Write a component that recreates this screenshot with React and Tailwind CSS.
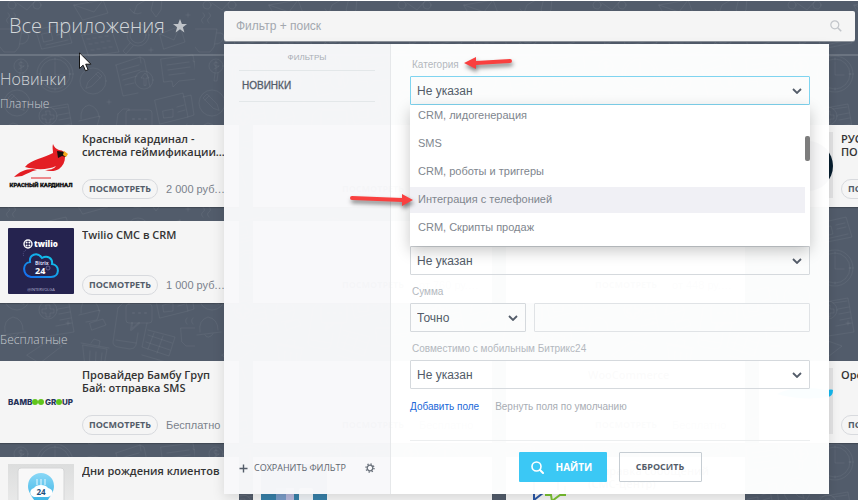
import React from "react";

const helv = "font-['Liberation_Sans',Arial,sans-serif]";

function Doodles() {
  return (
    <svg className="absolute inset-0 h-full w-full" aria-hidden="true">
      <defs>
        <pattern id="doodles" width="195" height="194" patternUnits="userSpaceOnUse">
          <g fill="none" stroke="#fff" strokeOpacity="0.05" strokeWidth="1" strokeLinejoin="round" strokeLinecap="round">
            <circle cx="55" cy="73" r="18" />
            <circle cx="55" cy="73" r="15" />
            <path d="M55 61v13h9M55 57v2M55 87v2M39 73h2M69 73h2" />
            <circle cx="21" cy="65" r="7" />
            <path d="M23 62q-4-2-4 1t4 2-4 3M21 60v10M20 72l-1 8h3l1-8" />
            <circle cx="93" cy="80" r="13" />
            <path d="M86 87l2-6 10-10 4 4-10 10zM96 73l4 4" />
            <circle cx="17" cy="102" r="13" />
            <path d="M24 109l-2-6-10-10-4 4 10 10zM14 95l-4 4" />
            <path d="M116 64l24-8 4 2 6 28M116 64l7 31 15-3M140 56l1 6M121 69l18-5M122 74l18-5M123 79l14-4M125 84l9-2" />
            <circle cx="144" cy="79" r="9" />
            <path d="M144 84v-7h-3l4-5 4 5h-3v7z" />
            <path d="M161 58l32-4 4 24-18 2-6 6-1-6-8 1zM167 64l22-3M168 69l22-3M169 74l16-2M193 60l6 3-2 22" />
            <path d="M155 99l28-7 5 24-28 7zM183 96l8-2 3 20-6 2M163 110l10-2v8l-9 1zM177 106l7-2M178 111l7-2" />
            <path d="M36 29l30-7 6 20-30 6zM42 33l9-2 2 8-9 2zM56 30l9-2M57 34l9-2M46 44l22-5" />
            <path d="M82 34l30-4 7 21-30 4zM87 38h3M93 37h3M99 36h3M105 35h3M89 43h3M95 42h3M101 41h3M107 40h3M91 49h3M97 48h3M103 47h3M109 46h3" />
            <circle cx="138" cy="34" r="11" />
            <circle cx="138" cy="34" r="8" />
            <path d="M130 42l-7 8 3 3 7-8" />
            <path d="M160 33l20-8 5 16-21 7zM160 33l14 6 6-14" />
            <path d="M0 28h22l-3 18-4 5H4L0 46M22 32q9-1 6 6-2 5-8 5M8 22q-3-3 0-5t0-5M14 22q-3-3 0-5t0-5" />
            <path d="M40 108l28-5 6 34-26 4M53 108l14-2M58 114l11-2M59 119l11-2M60 125l11-2M56 131l16-3" />
            <circle cx="48" cy="115" r="9" />
            <path d="M46 110h4v4h4v4h-4v4h-4v-4h-4v-4h4z" />
            <path d="M81 118q-1-12 8-14 9 2 10 12M79 120l21-5-3 10-11 2M90 128l13-4 3 6-14 5z" />
            <path d="M118 113l5-5h6M118 113l-5 34q0 4 5 5l12 2q5 0 6-4l2-12M116 145l20 3" />
            <rect x="126" y="109" width="26" height="19" rx="3" />
            <path d="M132 128l-1 7 8-7M133 118h1M139 118h1M145 118h1" strokeWidth="2" />
            <path d="M181 133h21l-3 14-4 4h-9l-4-4zM187 129q-3-3 0-6M193 129q-3-3 0-6" />
            <path d="M83 150l24 4-5 28-16-4zM81 148l28 5M91 148l3-4 6 2-1 5M90 156l-1 20M96 157l-1 20M102 158l-2 18" />
            <path d="M147 128l-5 24 27 9 6-19-27-7M142 160l24 7M148 140l24 8M146 147l24 8M154 138l-6 16M163 141l-6 17" />
            <path d="M27 160l21-14 14 5-22 17zM5 137q-2-12 8-15 10 2 10 13M2 140l24-3M10 140q3 5 8-1" />
            <path d="M74 4l29-5 5 13-25 7zM74 4l20 7 9-12M130 8q4 7 11 4M134 12l3-8 9-5M154-3l-3 12 5 7 5-7 1-12M17 2l10 7 8-9" />
            <circle cx="12" cy="4" r="4" />
            <circle cx="37" cy="4" r="4" />
            <path d="M135 175l20-5 8 16-20 6zM170 178l16 5-4 8M30 178l16-6 5 14" />
            <path d="M151 47v4M149 49h4M109 99v4M107 101h4M188 12v4M186 14h4M68 126v4M66 128h4" />
          </g>
        </pattern>
      </defs>
      <rect width="100%" height="100%" fill="url(#doodles)" />
    </svg>
  );
}

function CardinalLogo() {
  return (
    <svg viewBox="0 0 66 66" className="h-full w-full overflow-visible" aria-hidden="true">
      <path d="M45 12c1 3 3 5 6 6 4 0 7 3 6 7 0 5-2 9-6 12-3 2-9 3-14 1 5 0 9-1 11-4-8 4-20 4-31 1 3-4 8-6 13-8 6-2 11-4 15-6 0-3-1-6 0-9z" fill="#e31e24" />
      <path d="M6 45c5-5 11-8 19-8l4 1c-6 1-10 4-15 6z" fill="#e31e24" />
      <path d="M49 19l8 1 1 5-4-1-4 2z" fill="#17110f" />
      <path d="M56 19l4 3-2 3-3-2z" fill="#f6a81c" />
      <path d="M23 46h20" stroke="#e31e24" strokeWidth="1" />
      <text x="33" y="55" textAnchor="middle" fontSize="6" fontWeight="900" fill="#111" stroke="#111" strokeWidth="0.3" className="font-[Roboto,sans-serif]">КРАСНЫЙ КАРДИНАЛ</text>
    </svg>
  );
}

function TwilioLogo() {
  return (
    <svg viewBox="0 0 66 66" className="h-full w-full" aria-hidden="true">
      <defs>
        <linearGradient id="cloud" x1="0" y1="1" x2="1" y2="0">
          <stop offset="0" stopColor="#1668f0" />
          <stop offset="1" stopColor="#10d5e6" />
        </linearGradient>
      </defs>
      <rect width="66" height="66" rx="1" fill="#25234f" />
      <circle cx="20" cy="16" r="4" fill="none" stroke="#fff" strokeWidth="1.4" />
      <g fill="#fff">
        <circle cx="18.600" cy="14.600" r="1" /><circle cx="21.400" cy="14.600" r="1" />
        <circle cx="18.600" cy="17.400" r="1" /><circle cx="21.400" cy="17.400" r="1" />
      </g>
      <text x="26" y="19" fontSize="8" fontWeight="800" fill="#fff" className="font-['Open_Sans',sans-serif]">twilio</text>
      <path d="M23 49h20c9 0 9-12 1-13 1-6-5-9-10-6-5-7-13-3-12 4-8 1-8 13 1 15z" fill="none" stroke="url(#cloud)" strokeWidth="2" />
      <path d="M18 22q-4 2-2 7" fill="none" stroke="#55548a" strokeDasharray="1 1" />
      <text x="27" y="37" fontSize="5" fontWeight="700" fill="#d8d8ee" className="font-['Open_Sans',sans-serif]">Bitrix</text>
      <text x="27" y="46" fontSize="9" fontWeight="700" fill="#fff" className="font-['Open_Sans',sans-serif]">24</text>
      <circle cx="40" cy="40" r="2" fill="none" stroke="#8b8ab5" strokeWidth="0.6" />
      <text x="33" y="63" textAnchor="middle" fontSize="4" fill="#b8b7d3" className="font-['Open_Sans',sans-serif]">@INTERVOLGA</text>
    </svg>
  );
}

function BambooLogo() {
  return (
    <svg viewBox="0 0 66 66" className="h-full w-full overflow-visible" aria-hidden="true">
      <g fontSize="8" fontWeight="800" fill="#27335a" className="font-[Inter,sans-serif]">
        <text x="0" y="37">BAMB</text>
        <text x="37" y="37">GR</text>
        <text x="54" y="37">UP</text>
      </g>
      <g fill="#61c51c">
        <circle cx="27" cy="34" r="3" /><circle cx="33" cy="34" r="3" /><circle cx="51" cy="34" r="3" />
      </g>
    </svg>
  );
}

function BirthdayLogo() {
  return (
    <svg viewBox="0 0 66 66" className="h-full w-full" aria-hidden="true">
      <defs>
        <linearGradient id="tile" x1="0" y1="0" x2="0" y2="1">
          <stop offset="0" stopColor="#dcdddd" /><stop offset="1" stopColor="#f2f2f2" />
        </linearGradient>
        <linearGradient id="drop" x1="0" y1="0" x2="0" y2="1">
          <stop offset="0" stopColor="#8ad8f7" /><stop offset="1" stopColor="#1ba4dc" />
        </linearGradient>
      </defs>
      <rect width="66" height="66" fill="url(#tile)" />
      <rect x="10" y="4" width="46" height="60" rx="3" fill="#f8f8f8" stroke="#d5d6d7" />
      <path d="M20 22a13 13 0 0 1 26 0c0 9-8 13-13 28-5-15-13-19-13-28z" fill="url(#drop)" />
      <path d="M29 15v6M33 15v6M37 15v6" stroke="#e9f8ff" strokeWidth="1" />
      <path d="M26 33c-5-1-5-8 0-9 2-4 12-4 14 0 6 1 6 8 0 9z" fill="#fff" />
      <text x="33" y="31" textAnchor="middle" fontSize="8" fontWeight="700" fill="#1b4f7c" className="font-['Open_Sans',sans-serif]">24</text>
    </svg>
  );
}

function BlockLogo() {
  return (
    <svg viewBox="0 0 66 66" className="h-full w-full" aria-hidden="true">
      <rect width="66" height="66" fill="#377fa8" />
      <rect x="15" y="24" width="10" height="42" fill="#7a9cc8" />
      <rect x="25" y="24" width="8" height="42" fill="#b9b9dc" />
      <rect x="38" y="24" width="14" height="42" rx="2" fill="#eef2f6" />
    </svg>
  );
}

function ChatLogo() {
  return (
    <svg viewBox="0 0 66 66" className="h-full w-full" aria-hidden="true">
      <path d="M20 14h24v12M20 14v22l9-7" fill="none" stroke="#2b57a5" strokeWidth="2" />
      <path d="M51 22v9h-5l-8 6-1-6h-6" fill="none" stroke="#7ac231" strokeWidth="2" />
    </svg>
  );
}

function DarkCircleLogo() {
  return (
    <svg viewBox="0 0 66 66" className="h-full w-full" aria-hidden="true">
      <rect width="66" height="66" fill="#e4e4e5" />
      <circle cx="41" cy="34" r="25" fill="#061d2e" />
    </svg>
  );
}

function SkyLogo() {
  return (
    <svg viewBox="0 0 66 66" className="h-full w-full" aria-hidden="true">
      <rect width="66" height="66" fill="#e4e4e5" />
      <path d="M10 26q20-10 48-4 8-1 8 0 0 6-5 7-26 4-51-3z" fill="#14b9f0" />
    </svg>
  );
}

function Card({ title, price, logo: Logo }) {
  return (
    <article className="flex h-[82px] gap-2 bg-[#f5f5f5] px-2 pt-[7px] pb-2 shadow-[0_1px_1px_rgba(0,0,0,0.2)]">
      <div className="size-[66px] shrink-0">{Logo && <Logo />}</div>
      <div className="flex min-w-0 flex-1 flex-col justify-between">
        <h3 className="line-clamp-2 text-[11px] leading-[13px] font-semibold whitespace-pre-line text-[#333]">{title}</h3>
        <div className="flex items-center gap-2">
          <button className="h-5 w-[76px] shrink-0 rounded-full border border-[#d8dade] text-[9px] leading-4 font-bold text-[#535c69]">
            ПОСМОТРЕТЬ
          </button>
          <span className={`${helv} text-[11px] whitespace-nowrap text-[#7b828c]`}>{price}</span>
        </div>
      </div>
    </article>
  );
}

const paid = [
  { title: "Красный кардинал - система геймификации…", price: "2 000 руб.…", logo: CardinalLogo },
  { title: "", price: "" },
  { title: "", price: "" },
  { title: "РУССКИЙ\nПОРТАЛ", price: "", logo: DarkCircleLogo },
  { title: "Twilio СМС в CRM", price: "1 000 руб.…", logo: TwilioLogo },
  { title: "", price: "от 760 ру.…" },
  { title: "", price: "от 448 ру.…" },
];

const free = [
  { title: "Провайдер Бамбу Груп Бай: отправка SMS", price: "Бесплатно", logo: BambooLogo },
  { title: "", price: "Бесплатно" },
  { title: "WooCommerce", price: "Бесплатно" },
  { title: "Орен", price: "Бесплатно", logo: SkyLogo },
  { title: "Дни рождения клиентов", price: "Бесплатно", logo: BirthdayLogo },
  { title: "", price: "", logo: BlockLogo },
  { title: "Отправка сообщений (СМС-центр)", price: "", logo: ChatLogo },
];

function CardGrid({ items }) {
  return (
    <div className="grid grid-cols-[repeat(4,239px)] gap-[14px]">
      {items.map((item, i) => (
        <Card key={i} {...item} />
      ))}
    </div>
  );
}

function SelectBox({ id, value, label, active, className = "w-full" }) {
  return (
    <div className={`relative ${className}`}>
      <select
        id={id}
        aria-label={label}
        defaultValue={value}
        className={`h-[29px] w-full appearance-none rounded-[1px] border px-[6px] text-[12px] text-[#535c69] outline-none ${
          active ? "border-[#7fd4f0]" : "border-[#d5d9dd]"
        }`}
      >
        <option>{value}</option>
      </select>
      <svg viewBox="0 0 10 6" className="pointer-events-none absolute top-3 right-2 h-[6px] w-[10px]" aria-hidden="true">
        <path d="M1 1l4 4 4-4" fill="none" stroke="#535c69" strokeWidth="1.8" />
      </svg>
    </div>
  );
}

function RedArrow({ flip, className, length }) {
  const w = length;
  return (
    <svg
      width={w}
      height="16"
      viewBox={`0 0 ${w} 16`}
      className={`pointer-events-none absolute overflow-visible drop-shadow-[1px_3px_2px_rgba(0,0,0,0.5)] ${className}`}
      aria-hidden="true"
    >
      {flip ? (
        <path d={`M0 9L12 3v4L${w - 2} 5q2 0 2 2t-2 2L12 11v4z`} fill="#f9403f" />
      ) : (
        <path d={`M${w} 9L${w - 11} 3v4L2 5q-2 0-2 2t2 2L${w - 11} 11v4z`} fill="#f9403f" />
      )}
    </svg>
  );
}

const categories = [
  "CRM, лидогенерация",
  "SMS",
  "CRM, роботы и триггеры",
  "Интеграция с телефонией",
  "CRM, Скрипты продаж",
];

function CategoryList() {
  return (
    <div className="relative z-10 h-[141px] shadow-[0_5px_14px_rgba(0,0,0,0.22)]">
      <ul role="listbox" aria-label="Категория" className="flex h-full flex-col justify-end gap-[2px] overflow-hidden bg-white pr-[5px] pb-[5px]">
        {categories.map((name, i) => (
          <li
            key={name}
            role="option"
            aria-selected={i === 3}
            className={`h-[26px] shrink-0 pl-2 text-[11px] leading-6 text-[#80868e] ${i === 3 ? "bg-[#f0f0f5]" : ""}`}
          >
            {name}
          </li>
        ))}
      </ul>
      <div className="absolute top-[31px] right-0 h-[25px] w-[5px] rounded-[2px] bg-[#7d7d7d]" />
      <RedArrow length={63} className="top-[86px] -left-[60px]" />
    </div>
  );
}

function FilterPanel() {
  const label = "mb-[3px] block pl-[2px] text-[10px] leading-4 text-[#b3b8be]";
  return (
    <form
      onSubmit={(e) => e.preventDefault()}
      className={`${helv} absolute top-[33px] right-[26px] left-0 z-20 flex shadow-[0_4px_12px_rgba(0,0,0,0.12)]`}
    >
      <aside className="flex w-[167px] shrink-0 flex-col justify-between border-r border-[#e6e8ea] bg-[#f8f8fa]/98 px-[15px] pt-2 pb-4">
        <div>
          <h2 className="border-b border-[#e3e7e9] pb-[6px] text-center text-[8px] leading-3 text-[#a8adb4]">ФИЛЬТРЫ</h2>
          <a href="#new" className="block border-b border-[#e3e7e9] pl-[3px] text-[10px] leading-[30px] text-[#535c69] [-webkit-text-stroke:0.3px]">
            НОВИНКИ
          </a>
        </div>
        <div className="flex items-center justify-between font-['Open_Sans',sans-serif] text-[9px] leading-5 font-medium text-[#5f6670]">
          <button type="button" className="flex items-center gap-[6px]">
            <svg viewBox="0 0 9 9" className="size-[9px]" aria-hidden="true">
              <path d="M4.500 0.500v8M0.500 4.500h8" stroke="#535c69" strokeWidth="1.400" />
            </svg>
            СОХРАНИТЬ ФИЛЬТР
          </button>
          <button type="button" aria-label="Настройки">
            <svg viewBox="0 0 10 10" className="size-[10px]" aria-hidden="true">
              <circle cx="5" cy="5" r="2.800" fill="none" stroke="#6a717b" strokeWidth="1.300" />
              <circle cx="5" cy="5" r="4" fill="none" stroke="#6a717b" strokeWidth="1.400" strokeDasharray="1.300 1.842" />
            </svg>
          </button>
        </div>
      </aside>

      <div className="min-w-0 flex-1 bg-white/98 px-[19px] pt-[13px] pb-3">
        <div className="relative">
          <label htmlFor="category" className={label}>Категория</label>
          <RedArrow flip length={48} className="-top-[3px] left-[54px]" />
        </div>
        <SelectBox id="category" value="Не указан" active />
        <CategoryList />
        <SelectBox id="extra" label="Значение" value="Не указан" />

        <div className="mt-[9px]">
          <label htmlFor="sum-mode" className={label}>Сумма</label>
          <div className="flex gap-2">
            <SelectBox id="sum-mode" value="Точно" className="w-[116px] shrink-0" />
            <input aria-label="Сумма" className="h-[29px] min-w-0 flex-1 rounded-[1px] border border-[#e0e3e6] bg-transparent px-2 text-[12px]" />
          </div>
        </div>

        <div className="mt-[9px]">
          <label htmlFor="mobile" className={label}>Совместимо с мобильным Битрикс24</label>
          <SelectBox id="mobile" value="Не указан" />
        </div>

        <div className="mt-[10px] flex gap-4 border-b border-[#eceeef] pb-[25px] text-[10px] leading-4">
          <a href="#add" className="text-[#2067d8]">Добавить поле</a>
          <a href="#reset" className="text-[#a8adb4]">Вернуть поля по умолчанию</a>
        </div>

        <div className="mt-[11px] flex justify-center gap-3 font-['Open_Sans',sans-serif] text-[10px] font-bold">
          <button type="submit" className="flex h-[30px] w-[88px] items-center gap-3 rounded-[1px] bg-[#3bc8f5] pl-3 text-white">
            <svg viewBox="0 0 13 13" className="size-[13px]" aria-hidden="true">
              <circle cx="5.500" cy="5.500" r="4.500" fill="none" stroke="currentColor" strokeWidth="1.600" />
              <path d="M9 9l3 3" stroke="currentColor" strokeWidth="2" strokeLinecap="round" />
            </svg>
            НАЙТИ
          </button>
          <button type="reset" className="h-[30px] w-[83px] rounded-[1px] border border-[#c6cdd3] text-[9px] text-[#535c69]">СБРОСИТЬ</button>
        </div>
      </div>
    </form>
  );
}

export default function App() {
  return (
    <div className="relative h-screen overflow-hidden border-t border-white bg-[#525c6b] font-['Open_Sans',sans-serif]">
      <Doodles />
      <header className="relative z-10 flex h-[55px] border-b-2 border-white/15 pt-[10px] pr-[3px]">
        <div className="flex h-[30px] w-[224px] shrink-0 items-center gap-2 pl-[9px]">
          <h1 className="text-[20px] font-light text-[#d3d7da]">Все приложения</h1>
          <svg viewBox="0 0 14 14" className="size-[14px]" aria-hidden="true">
            <path d="M7 0l1.900 5H14l-4.100 3.200L11.400 13.500 7 10.300 2.600 13.500 4.100 8.200 0 5h5.100z" fill="#c0c4c9" />
          </svg>
        </div>
        <div className="relative h-[30px] min-w-0 flex-1">
          <label className="flex h-[30px] items-center rounded-[2px] bg-[#f5f5f5] pr-[13px] pl-3 shadow-[0_1px_0_#8d939b]">
            <input
              type="search"
              aria-label="Фильтр + поиск"
              placeholder="Фильтр + поиск"
              className={`${helv} min-w-0 flex-1 bg-transparent text-[12px] outline-none placeholder:text-[#a3a8af]`}
            />
            <svg viewBox="0 0 12 12" className="size-3" aria-hidden="true">
              <circle cx="4.800" cy="4.800" r="4" fill="none" stroke="#c2c5ca" strokeWidth="1.200" />
              <path d="M7.800 7.800l3.400 3.400" stroke="#c2c5ca" strokeWidth="1.600" />
            </svg>
          </label>
          <FilterPanel />
        </div>
      </header>

      <main className="relative">
        <h2 className="pt-[11px] text-[16px] leading-6 font-light text-[#d3d7da]">Новинки</h2>
        <h3 className="mt-[5px] mb-[13px] text-[12px] leading-4 font-light text-[#c6cacf]">Платные</h3>
        <CardGrid items={paid} />
        <h3 className="mt-[29px] mb-[13px] text-[12px] leading-4 font-light text-[#c6cacf]">Бесплатные</h3>
        <CardGrid items={free} />
      </main>

      <svg viewBox="0 0 13 20" className="pointer-events-none absolute top-[51px] left-[79px] h-5 w-[13px]" aria-hidden="true">
        <path d="M0.500 0.800v15.700l3.600-3.300 2.400 5.600 2.600-1.100-2.400-5.500h5.200z" fill="#fff" stroke="#111" strokeWidth="1" />
      </svg>
    </div>
  );
}
